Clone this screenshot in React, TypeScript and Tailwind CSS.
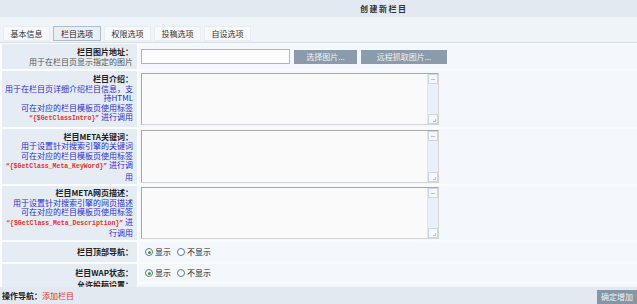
const TABS = ['基本信息', '栏目选项', '权限选项', '投稿选项', '自设选项']

function FakeTextarea() {
  return (
    <div className="w-[298px] h-full flex border border-[#a9a9a9] border-r-[#d4d4d4] border-b-[#d4d4d4] bg-[#fafafa]">
      <div className="flex-1" />
      <div className="w-[11px] flex flex-col justify-between bg-[#e9f0f9] border-l border-[#e0e6ee]">
        <div className="h-[10px] border border-[#cfd6df] bg-[#f4f7fb] flex items-center justify-center">
          <div className="w-[4px] h-px bg-[#b9c2cc]" />
        </div>
        <div className="h-[10px] border border-[#cfd6df] bg-[#f4f7fb] flex items-end justify-end p-px">
          <div className="w-[3px] h-[3px] border-r border-b border-[#b9c2cc]" />
        </div>
      </div>
    </div>
  )
}

function Radio({ checked, label }: { checked?: boolean; label: string }) {
  return (
    <span className="flex items-center gap-[2px]">
      <span className="w-[8px] h-[8px] rounded-full border border-[#55799f] bg-white flex items-center justify-center">
        {checked && <span className="w-[3px] h-[3px] rounded-full bg-[#2fa52f]" />}
      </span>
      <span className="text-[#222]">{label}</span>
    </span>
  )
}

const Code = ({ children }: { children: string }) => (
  <span className="text-[#e8322c] font-['Liberation_Mono',monospace] text-[6.5px] font-bold">{children}</span>
)

export default function App() {
  return (
    <div className="w-[637px] h-[304px] overflow-hidden flex flex-col bg-[#fbfcfe] text-[8px] leading-[9.5px] font-['Noto_Sans_CJK_SC','Noto_Sans',sans-serif]">
      {/* 标题 */}
      <div className="h-[17px] shrink-0 bg-[#e2e9f1] flex items-center pl-[360px]">
        <span className="font-bold text-[#333] tracking-[1.5px]">创建新栏目</span>
      </div>

      {/* 选项卡 */}
      <div className="h-[26px] shrink-0 bg-[#eff4f9] border-b border-[#d5dbe2] flex items-end gap-[3px] pl-[3px] pb-px">
        {TABS.map((t, i) => (
          <div key={t}
            className={i === 1
              ? 'w-[48px] h-[15px] flex items-center justify-center border border-[#aebccb] bg-[#e8eef6] text-[#222]'
              : 'w-[47px] h-[15px] flex items-center justify-center border border-[#e8edf3] bg-[#f7f9fc] text-[#333]'}>
            {t}
          </div>
        ))}
      </div>

      {/* 表单 */}
      <div className="flex-1 overflow-hidden pt-px pl-[2px]">
        <div className="grid grid-cols-[135px_1fr] grid-rows-[25px_56px_55px_54px_20px_18px_20px] gap-[2px] whitespace-nowrap">
          <div className="bg-[#e5ecf4] flex flex-col justify-center items-end text-right pr-[4px]">
            <div className="font-bold text-[#222]">栏目图片地址：</div>
            <div className="text-[#555]">用于在栏目页显示指定的图片</div>
          </div>
          <div className="bg-[#f4f8fc] flex items-center gap-[4px] pl-[2px]">
            <div className="w-[149px] h-[15px] border border-[#b5b5b5] bg-[#fcfcfc]" />
            <button className="w-[63px] h-[14px] bg-[#8a9bab] text-[#eef2f6]">选择图片...</button>
            <button className="w-[86px] h-[14px] bg-[#8a9bab] text-[#eef2f6]">远程抓取图片...</button>
          </div>

          <div className="bg-[#e5ecf4] flex flex-col justify-center items-end text-right pr-[4px] text-[#1f2fe0]">
            <div className="font-bold text-[#222]">栏目介绍：</div>
            <div>用于在栏目页详细介绍栏目信息，支</div>
            <div>持HTML</div>
            <div>可在对应的栏目模板页使用标签</div>
            <div><Code>{'“{$GetClassIntro}”'}</Code> 进行调用</div>
          </div>
          <div className="bg-[#f4f8fc] pl-[2px] py-[2px]"><FakeTextarea /></div>

          <div className="bg-[#e5ecf4] flex flex-col justify-center items-end text-right pr-[4px] text-[#1f2fe0]">
            <div className="font-bold text-[#222]">栏目META关键词：</div>
            <div>用于设置针对搜索引擎的关键词</div>
            <div>可在对应的栏目模板页使用标签</div>
            <div><Code>{'“{$GetClass_Meta_KeyWord}”'}</Code> 进行调</div>
            <div>用</div>
          </div>
          <div className="bg-[#f4f8fc] pl-[2px] py-[1px]"><FakeTextarea /></div>

          <div className="bg-[#e5ecf4] flex flex-col justify-center items-end text-right pr-[4px] text-[#1f2fe0]">
            <div className="font-bold text-[#222]">栏目META网页描述：</div>
            <div>用于设置针对搜索引擎的网页描述</div>
            <div>可在对应的栏目模板页使用标签</div>
            <div><Code>{'“{$GetClass_Meta_Description}”'}</Code> 进</div>
            <div>行调用</div>
          </div>
          <div className="bg-[#f4f8fc] pl-[2px] py-[1px]"><FakeTextarea /></div>

          <div className="bg-[#e5ecf4] flex items-center justify-end pr-[4px] font-bold text-[#222]">栏目顶部导航：</div>
          <div className="bg-[#f4f8fc] flex items-center gap-[6px] pl-[6px]">
            <Radio checked label="显示" />
            <Radio label="不显示" />
          </div>

          <div className="bg-[#e5ecf4] flex items-center justify-end pr-[4px] font-bold text-[#222]">栏目WAP状态：</div>
          <div className="bg-[#f4f8fc] flex items-center gap-[6px] pl-[6px]">
            <Radio checked label="显示" />
            <Radio label="不显示" />
          </div>

          <div className="bg-[#e5ecf4] flex items-start justify-end pr-[4px] font-bold text-[#222] -mt-[4px]">允许投稿设置：</div>
          <div className="bg-[#f4f8fc]" />
        </div>
      </div>

      {/* 底部 */}
      <div className="h-[17px] shrink-0 bg-[#e2e9f0] flex items-center justify-between pl-[2px]">
        <div>
          <span className="font-bold text-[#222]">操作导航：</span>
          <span className="text-[#e8322c]">添加栏目</span>
        </div>
        <button className="w-[40px] h-[14px] self-end bg-[#8596a6] text-[#eef2f6]">确定增加</button>
      </div>
    </div>
  )
}
